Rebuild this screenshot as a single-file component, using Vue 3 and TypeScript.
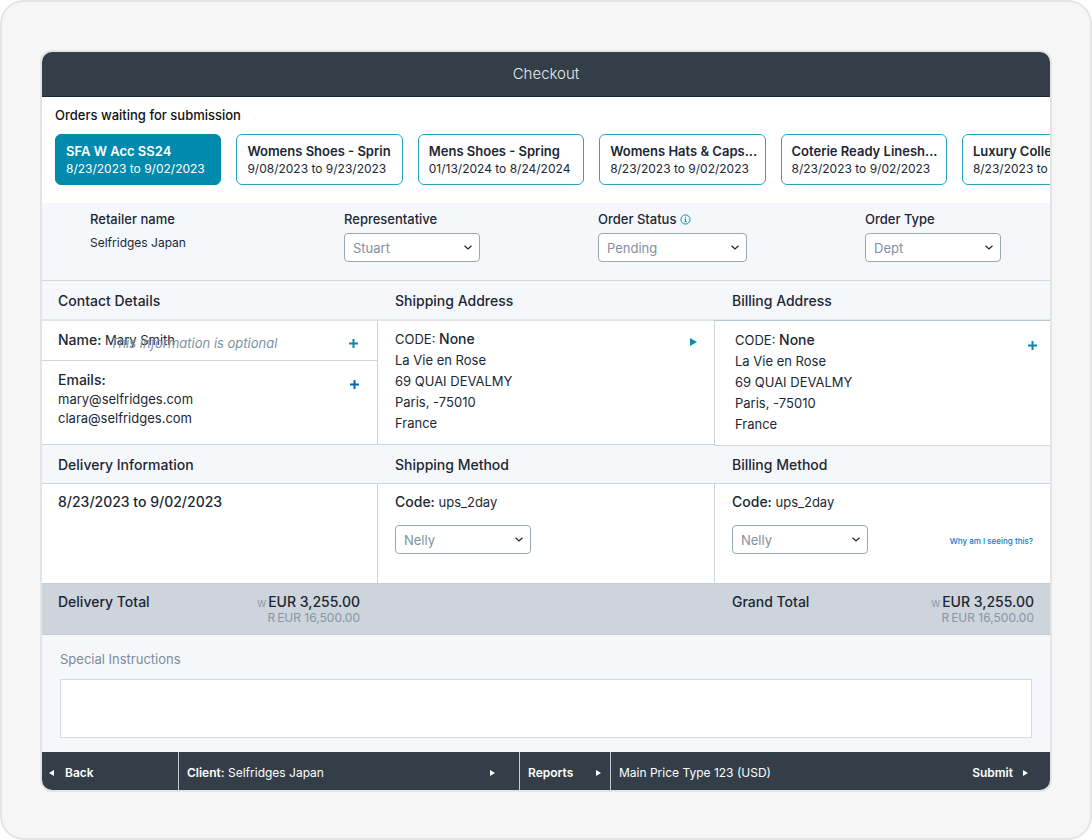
<script setup lang="ts">
import { ref } from 'vue'

interface Order {
  name: string
  dates: string
}

const orders: Order[] = [
  { name: 'SFA W Acc SS24', dates: '8/23/2023 to 9/02/2023' },
  { name: 'Womens Shoes - Sprin', dates: '9/08/2023 to 9/23/2023' },
  { name: 'Mens Shoes - Spring', dates: '01/13/2024 to 8/24/2024' },
  { name: 'Womens Hats & Caps...', dates: '8/23/2023 to 9/02/2023' },
  { name: 'Coterie Ready Linesh...', dates: '8/23/2023 to 9/02/2023' },
  { name: 'Luxury Collection', dates: '8/23/2023 to 9/02/2023' },
]

const address: string[] = ['La Vie en Rose', '69 QUAI DEVALMY', 'Paris, -75010', 'France']
const emails: string[] = ['mary@selfridges.com', 'clara@selfridges.com']

const selected = ref(0)
const representative = ref('Stuart')
const status = ref('Pending')
const orderType = ref('Dept')
const shippingMethod = ref('Nelly')
const billingMethod = ref('Nelly')
const instructions = ref('')
</script>

<template>
  <div class="frame">
    <main class="app">
      <header class="titlebar">
        <h1>Checkout</h1>
      </header>

      <section class="orders">
        <h2>Orders waiting for submission</h2>
        <div class="order-list">
          <button
            v-for="(order, i) in orders"
            :key="order.name"
            type="button"
            class="order"
            :class="{ active: i === selected }"
            @click="selected = i"
          >
            <strong>{{ order.name }}</strong>
            <span>{{ order.dates }}</span>
          </button>
        </div>
      </section>

      <section class="filters">
        <div class="field">
          <span class="label">Retailer name</span>
          <span class="value">Selfridges Japan</span>
        </div>
        <div class="field">
          <label class="label" for="representative">Representative</label>
          <div class="select">
            <select id="representative" v-model="representative">
              <option>Stuart</option>
            </select>
            <svg viewBox="0 0 8 5"><path d="M.5.7 4 4 7.5.7" /></svg>
          </div>
        </div>
        <div class="field">
          <label class="label" for="status">
            Order Status
            <svg class="info" viewBox="0 0 11 11">
              <circle cx="5.5" cy="5.5" r="4.6" />
              <path d="M4.5 4.9H5.5V7.6M4.4 7.7H6.7M5 3.2H6" />
            </svg>
          </label>
          <div class="select wide">
            <select id="status" v-model="status">
              <option>Pending</option>
            </select>
            <svg viewBox="0 0 8 5"><path d="M.5.7 4 4 7.5.7" /></svg>
          </div>
        </div>
        <div class="field">
          <label class="label" for="type">Order Type</label>
          <div class="select">
            <select id="type" v-model="orderType">
              <option>Dept</option>
            </select>
            <svg viewBox="0 0 8 5"><path d="M.5.7 4 4 7.5.7" /></svg>
          </div>
        </div>
      </section>

      <div class="row heads first">
        <h3>Contact Details</h3>
        <h3>Shipping Address</h3>
        <h3>Billing Address</h3>
      </div>
      <div class="row details">
        <section class="cell contact">
          <div class="name">
            <p><b>Name:</b> Mary Smith</p>
            <em>This information is optional</em>
            <button type="button" class="icon" aria-label="Add name">
              <svg class="plus" viewBox="0 0 9 9"><path d="M4.5 0V9M0 4.5H9" /></svg>
            </button>
          </div>
          <div class="emails">
            <div>
              <p><b>Emails:</b></p>
              <p v-for="email in emails" :key="email">{{ email }}</p>
            </div>
            <button type="button" class="icon" aria-label="Add email">
              <svg class="plus blue" viewBox="0 0 9 9"><path d="M4.5 0V9M0 4.5H9" /></svg>
            </button>
          </div>
        </section>
        <section class="cell shipping">
          <address>
            <p>CODE: <b>None</b></p>
            <p v-for="line in address" :key="line">{{ line }}</p>
          </address>
          <button type="button" class="icon" aria-label="Change shipping address">
            <svg class="play" viewBox="0 0 7 8"><path d="M0 0 7 4 0 8Z" /></svg>
          </button>
        </section>
        <section class="cell billing">
          <address>
            <p>CODE: <b>None</b></p>
            <p v-for="line in address" :key="line">{{ line }}</p>
          </address>
          <button type="button" class="icon" aria-label="Add billing address">
            <svg class="plus" viewBox="0 0 9 9"><path d="M4.5 0V9M0 4.5H9" /></svg>
          </button>
        </section>
      </div>

      <div class="row heads">
        <h3>Delivery Information</h3>
        <h3>Shipping Method</h3>
        <h3>Billing Method</h3>
      </div>
      <div class="row methods">
        <section class="cell">
          <p><b>8/23/2023 to 9/02/2023</b></p>
        </section>
        <section class="cell">
          <label for="shipping"><b>Code:</b> ups_2day</label>
          <div class="select">
            <select id="shipping" v-model="shippingMethod">
              <option>Nelly</option>
            </select>
            <svg viewBox="0 0 8 5"><path d="M.5.7 4 4 7.5.7" /></svg>
          </div>
        </section>
        <section class="cell">
          <label for="billing"><b>Code:</b> ups_2day</label>
          <div class="method">
            <div class="select">
              <select id="billing" v-model="billingMethod">
                <option>Nelly</option>
              </select>
              <svg viewBox="0 0 8 5"><path d="M.5.7 4 4 7.5.7" /></svg>
            </div>
            <a href="#">Why am I seeing this?</a>
          </div>
        </section>
      </div>

      <div class="row totals">
        <section class="total">
          <h3>Delivery Total</h3>
          <div class="amounts">
            <p class="main"><small>W</small><span>EUR 3,255.00</span></p>
            <p class="sub"><span>R</span><span>EUR 16,500.00</span></p>
          </div>
        </section>
        <section class="total grand">
          <h3>Grand Total</h3>
          <div class="amounts">
            <p class="main"><small>W</small><span>EUR 3,255.00</span></p>
            <p class="sub"><span>R</span><span>EUR 16,500.00</span></p>
          </div>
        </section>
      </div>

      <section class="notes">
        <label for="notes">Special Instructions</label>
        <textarea id="notes" v-model="instructions"></textarea>
      </section>

      <footer class="bar">
        <button type="button" class="back">
          <svg class="tri" viewBox="0 0 5 6"><path d="M5 0 0 3 5 6Z" /></svg>
          <b>Back</b>
        </button>
        <button type="button" class="client">
          <span><b>Client:</b> Selfridges Japan</span>
          <svg class="tri" viewBox="0 0 5 6"><path d="M0 0 5 3 0 6Z" /></svg>
        </button>
        <button type="button" class="reports">
          <b>Reports</b>
          <svg class="tri" viewBox="0 0 5 6"><path d="M0 0 5 3 0 6Z" /></svg>
        </button>
        <div class="price">
          <span>Main Price Type 123 (USD)</span>
          <button type="button" class="submit">
            <b>Submit</b>
            <svg class="tri" viewBox="0 0 5 6"><path d="M0 0 5 3 0 6Z" /></svg>
          </button>
        </div>
      </footer>
    </main>
  </div>
</template>

<style>
body {
  margin: 0;
  background: #fff;
}
</style>

<style scoped>
* {
  box-sizing: border-box;
}

.frame {
  min-height: 100vh;
  padding: 48px 38px 46px;
  border: 2px solid #e5e5e5;
  border-radius: 24px;
  background: #f6f6f6;
  color: #1b2733;
  font-family: Inter, 'Liberation Sans', sans-serif;
  font-size: 13px;
  line-height: 20px;
}

.app {
  overflow: hidden;
  border: 2px solid #e3e4e5;
  border-radius: 12px;
  background: #fff;
}

h1,
h2,
h3,
p {
  margin: 0;
  font-size: inherit;
  font-weight: 400;
}

b,
strong,
h3 {
  font-size: 14px;
  font-weight: 500;
}

b {
  line-height: 1;
}

button {
  margin: 0;
  padding: 0;
  border: 0;
  background: none;
  color: inherit;
  font: inherit;
  text-align: left;
  cursor: pointer;
}

svg {
  display: block;
  flex: none;
}

.titlebar {
  display: flex;
  align-items: center;
  justify-content: center;
  height: 45px;
  border-bottom: 1px solid #1b2733;
  background: #333e48;
}

.titlebar h1 {
  color: #e6eaee;
  font-size: 15px;
  font-weight: 300;
}

.orders {
  padding: 8px 0 18px 13px;
}

.orders h2 {
  color: #111;
  font-size: 13px;
  font-weight: 500;
}

.order-list {
  display: grid;
  grid-auto-flow: column;
  grid-auto-columns: calc(18.23% - 15px);
  gap: 15px;
  margin-top: 9px;
  overflow: hidden;
}

.order {
  display: flex;
  flex-direction: column;
  justify-content: center;
  height: 51px;
  padding: 0 10px;
  border: 1px solid #2aa3bf;
  border-radius: 6px;
  font-size: 12px;
  line-height: 17px;
  white-space: nowrap;
}

.order strong {
  font-size: 13px;
  font-weight: 600;
}

.order.active {
  border-color: #008bae;
  background: #008bae;
  color: #fff;
}

.filters {
  display: grid;
  grid-template-columns: 254fr 254fr 267fr 185fr;
  height: 77px;
  padding: 6px 0 0 48px;
  background: #f6f7fb;
}

.field {
  display: flex;
  flex-direction: column;
  align-items: flex-start;
}

.label {
  display: flex;
  align-items: center;
  gap: 4px;
  font-weight: 500;
}

.value {
  margin-top: 4px;
  font-size: 12px;
}

.info {
  width: 11px;
  height: 11px;
  fill: none;
  stroke: #0a93b5;
}

.field .select {
  margin-top: 4px;
}

.select {
  position: relative;
  width: 136px;
}

.select.wide {
  width: 149px;
}

.select select {
  display: block;
  width: 100%;
  height: 29px;
  padding: 0 24px 0 8px;
  border: 1px solid #9aa8b4;
  border-radius: 4px;
  background: #fff;
  color: #8290a0;
  font: inherit;
  appearance: none;
}

.select svg {
  position: absolute;
  top: 12px;
  right: 8px;
  width: 8px;
  height: 5px;
  fill: none;
  stroke: #1b2733;
  stroke-width: 1.2;
  pointer-events: none;
}

.row {
  display: grid;
  grid-template-columns: repeat(3, 1fr);
}

.heads {
  align-items: center;
  height: 39px;
  padding-top: 1px;
  border-bottom: 1px solid #d0d7dd;
  background: #f6f7fb;
}

.heads.first {
  height: 40px;
  padding-top: 2px;
  border-top: 1px solid #d0d7dd;
  border-bottom-color: #e1e5ea;
}

.heads h3 {
  padding-left: 17px;
}

.heads h3:first-child {
  padding-left: 16px;
}

.heads h3:last-child {
  padding-left: 18px;
}

.cell:first-child {
  border-right: 1px solid #cdd5db;
}

.cell:last-child {
  border-left: 1px solid #cdd5db;
}

.details .cell {
  border-top: 1px solid #e1e5ea;
  border-bottom: 1px solid #cdd5db;
}

.name {
  position: relative;
  display: flex;
  align-items: flex-start;
  justify-content: space-between;
  height: 40px;
  padding: 9px 19px 0 16px;
  border-bottom: 1px solid #cdd5db;
}

.name em {
  position: absolute;
  top: 12px;
  left: 68px;
  color: #8092a0;
}

.icon {
  display: flex;
}

.name .icon {
  margin-top: 9px;
}

.plus {
  width: 9px;
  height: 9px;
  stroke: #0a86aa;
  stroke-width: 2;
}

.plus.blue {
  stroke: #0067b8;
}

.play {
  width: 7px;
  height: 8px;
  fill: #0a8bae;
}

.emails {
  display: flex;
  align-items: flex-start;
  justify-content: space-between;
  padding: 10px 18px 15px 16px;
  line-height: 19px;
}

.emails .icon {
  margin-top: 9px;
}

.shipping,
.billing {
  display: flex;
  align-items: flex-start;
  justify-content: space-between;
  padding: 8px 17px 10px;
}

.shipping .icon {
  margin-top: 9px;
}

.details .billing {
  position: relative;
  z-index: 1;
  margin-bottom: -1px;
  padding: 9px 13px 10px 20px;
  border-top-color: #b8c6cf;
  background: #fff;
}

.billing .icon {
  margin-top: 11px;
}

address {
  font-style: normal;
  line-height: 21px;
}

.methods .cell {
  height: 99px;
  padding: 8px 17px 0;
}

.methods .cell:first-child {
  padding-left: 16px;
}

.methods label {
  display: block;
}

.methods .select {
  margin-top: 13px;
}

.method {
  display: flex;
  align-items: center;
  justify-content: space-between;
}

.method a {
  margin-top: 16px;
  color: #0a78cc;
  font-size: 8px;
  font-weight: 500;
  line-height: 12px;
  text-decoration: none;
}

.totals {
  height: 52px;
  border-top: 1px solid #c5ced5;
  border-bottom: 1px solid #c2ccd3;
  background: #cdd4db;
}

.total {
  display: flex;
  justify-content: space-between;
  padding: 8px 18px 0 16px;
}

.grand {
  grid-column: 3;
  padding: 8px 16px 0 18px;
}

.amounts p {
  display: flex;
  align-items: baseline;
  justify-content: flex-end;
  gap: 2px;
}

.amounts .main {
  font-size: 14px;
  font-weight: 500;
}

.main small {
  color: #8796a3;
  font-size: 9px;
  font-weight: 400;
  line-height: 1;
}

.amounts .sub {
  color: #8796a3;
  font-size: 12px;
  line-height: 12px;
}

.notes {
  padding: 14px 18px;
  background: #f6f7fb;
}

.notes label {
  display: block;
  color: #7b8b99;
}

.notes textarea {
  display: block;
  width: 100%;
  height: 59px;
  margin-top: 10px;
  padding: 8px;
  border: 1px solid #d5d9e0;
  background: #fff;
  font: inherit;
  resize: none;
}

.bar {
  display: grid;
  grid-template-columns: 136fr 341fr 91fr 440fr;
  height: 38px;
  background: #333e48;
  color: #fff;
  font-size: 12px;
}

.bar b {
  font-size: 12px;
  font-weight: 600;
}

.bar > * {
  display: flex;
  align-items: center;
  justify-content: space-between;
  padding: 3px 12px 0 8px;
}

.bar > * + * {
  border-left: 1px solid #c5cbd0;
}

.bar > .back {
  justify-content: flex-start;
  gap: 11px;
  padding-left: 7px;
}

.bar > .client {
  padding-right: 24px;
}

.bar > .reports {
  padding-right: 9px;
}

.bar > .price {
  padding-right: 22px;
}

.submit {
  display: flex;
  align-items: center;
  gap: 10px;
}

.tri {
  width: 5px;
  height: 6px;
  fill: #fff;
}
</style>
